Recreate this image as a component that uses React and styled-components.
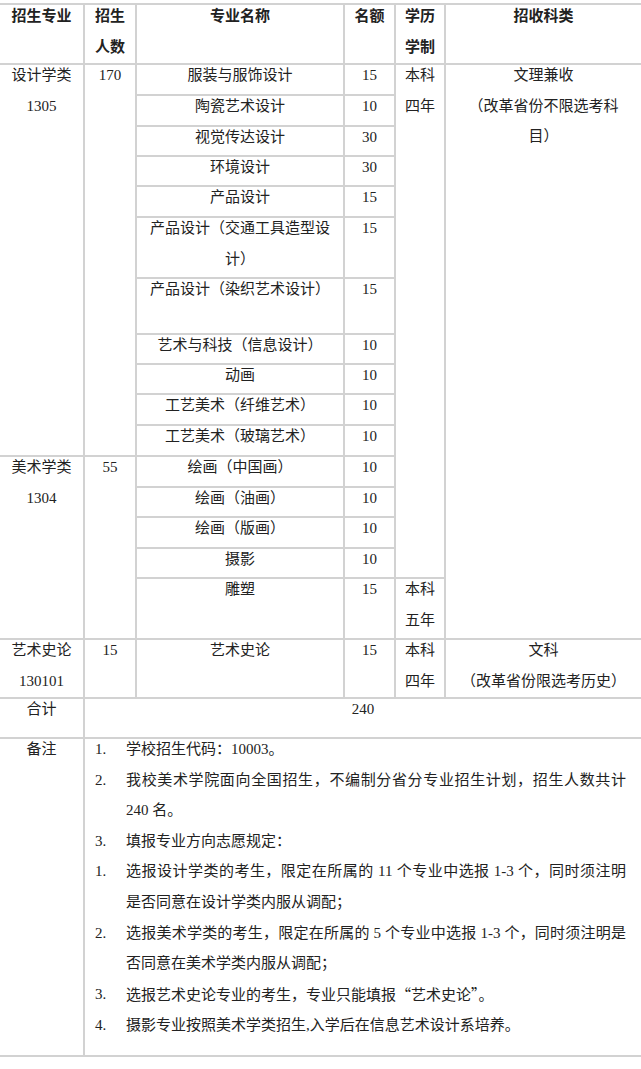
import React from 'react';
import styled, { createGlobalStyle } from 'styled-components';

const GlobalStyle = createGlobalStyle`
  html, body {
    margin: 0;
    padding: 0;
    background: #fff;
  }
  body {
    font-family: "Liberation Serif", "Noto Sans CJK SC", serif;
    color: #222;
  }
`;

const Page = styled.div`
  width: 641px;
  padding-top: 3px;
  overflow: hidden;
`;

const Table = styled.table`
  width: 641px;
  border-collapse: collapse;
  table-layout: fixed;
  font-size: 15px;
  line-height: 30.5px;
  border-top: 2px solid #d2d2d2;
  border-bottom: 2px solid #d2d2d2;
`;

const Col = styled.col`
  width: ${p => p.$w}px;
`;

const Row = styled.tr`
  height: ${p => p.$h}px;
`;

const Cell = styled.td`
  border: 2px solid #d2d2d2;
  padding: 0 4px;
  vertical-align: top;
  text-align: ${p => p.$align || 'center'};
  font-weight: ${p => (p.$head ? 700 : 400)};

  &:first-child {
    border-left: none;
  }
  &:last-child {
    border-right: none;
  }
`;

const Text = styled.div`
  margin-top: ${p => (p.$head ? -4 : -5)}px;
`;

const Notes = styled.div`
  margin-top: -5px;
  padding: 0 11px 0 6px;
  line-height: 30.6px;
`;

const NoteItem = styled.div`
  display: grid;
  grid-template-columns: 31px 1fr;
`;

const NoteNum = styled.span``;

const NoteLine = styled.div`
  text-align: ${p => (p.$fill ? 'justify' : 'left')};
  text-align-last: ${p => (p.$fill ? 'justify' : 'auto')};
`;

const Cjk = styled.span`
  font-family: "Noto Sans CJK SC", sans-serif;
`;

const C = ({ children, $head, ...rest }) => (
  <Cell $head={$head} {...rest}>
    <Text $head={$head}>{children}</Text>
  </Cell>
);

const notes = [
  ['1.', ['学校招生代码：10003。']],
  ['2.', ['我校美术学院面向全国招生，不编制分省分专业招生计划，招生人数共计', '240 名。']],
  ['3.', ['填报专业方向志愿规定：']],
  ['1.', ['选报设计学类的考生，限定在所属的 11 个专业中选报 1-3 个，同时须注明', '是否同意在设计学类内服从调配；']],
  ['2.', ['选报美术学类的考生，限定在所属的 5 个专业中选报 1-3 个，同时须注明是', '否同意在美术学类内服从调配；']],
  ['3.', [<>选报艺术史论专业的考生，专业只能填报<Cjk>“艺术史论”</Cjk>。</>]],
  ['4.', ['摄影专业按照美术学类招生,入学后在信息艺术设计系培养。']],
];

export default function App() {
  return (
    <Page>
      <GlobalStyle />
      <Table>
        <colgroup>
          <Col $w={84} />
          <Col $w={52} />
          <Col $w={208} />
          <Col $w={51} />
          <Col $w={50} />
          <Col $w={196} />
        </colgroup>
        <tbody>
          <Row $h={60}>
            <C $head>招生专业</C>
            <C $head>招生<br />人数</C>
            <C $head>专业名称</C>
            <C $head>名额</C>
            <C $head>学历<br />学制</C>
            <C $head>招收科类</C>
          </Row>

          <Row $h={31}>
            <C rowSpan={11}>设计学类<br />1305</C>
            <C rowSpan={11}>170</C>
            <C>服装与服饰设计</C>
            <C>15</C>
            <C rowSpan={15}>本科<br />四年</C>
            <C rowSpan={16}>文理兼收<br />（改革省份不限选考科<br />目）</C>
          </Row>
          <Row $h={31}><C>陶瓷艺术设计</C><C>10</C></Row>
          <Row $h={30}><C>视觉传达设计</C><C>30</C></Row>
          <Row $h={30}><C>环境设计</C><C>30</C></Row>
          <Row $h={31}><C>产品设计</C><C>15</C></Row>
          <Row $h={61}><C>产品设计（交通工具造型设<br />计）</C><C>15</C></Row>
          <Row $h={56}><C>产品设计（染织艺术设计）</C><C>15</C></Row>
          <Row $h={30}><C>艺术与科技（信息设计）</C><C>10</C></Row>
          <Row $h={30}><C>动画</C><C>10</C></Row>
          <Row $h={31}><C>工艺美术（纤维艺术）</C><C>10</C></Row>
          <Row $h={31}><C>工艺美术（玻璃艺术）</C><C>10</C></Row>

          <Row $h={31}>
            <C rowSpan={5}>美术学类<br />1304</C>
            <C rowSpan={5}>55</C>
            <C>绘画（中国画）</C>
            <C>10</C>
          </Row>
          <Row $h={30}><C>绘画（油画）</C><C>10</C></Row>
          <Row $h={31}><C>绘画（版画）</C><C>10</C></Row>
          <Row $h={30}><C>摄影</C><C>10</C></Row>
          <Row $h={61}>
            <C>雕塑</C>
            <C>15</C>
            <C>本科<br />五年</C>
          </Row>

          <Row $h={59}>
            <C>艺术史论<br />130101</C>
            <C>15</C>
            <C>艺术史论</C>
            <C>15</C>
            <C>本科<br />四年</C>
            <C>文科<br />（改革省份限选考历史）</C>
          </Row>

          <Row $h={40}>
            <C>合计</C>
            <C colSpan={5}>240</C>
          </Row>

          <Row $h={318}>
            <C>备注</C>
            <Cell colSpan={5} $align="left">
              <Notes>
                {notes.map(([num, lines], i) => (
                  <NoteItem key={i}>
                    <NoteNum>{num}</NoteNum>
                    <div>
                      {lines.map((line, j) => (
                        <NoteLine key={j} $fill={j < lines.length - 1}>{line}</NoteLine>
                      ))}
                    </div>
                  </NoteItem>
                ))}
              </Notes>
            </Cell>
          </Row>
        </tbody>
      </Table>
    </Page>
  );
}
